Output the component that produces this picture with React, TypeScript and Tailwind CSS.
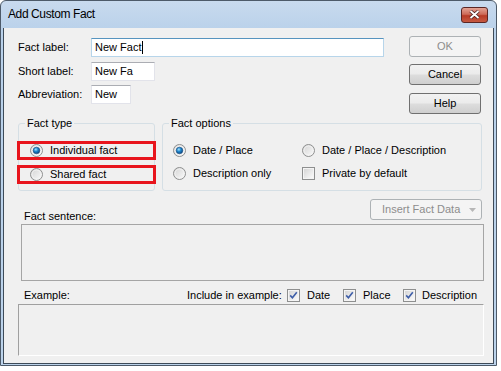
import React from "react";

function Radio({ checked }: { checked?: boolean }) {
  return (
    <svg width="13" height="13" viewBox="0 0 13 13" className="shrink-0">
      <defs>
        <linearGradient id="rf" x1="0" y1="0" x2="1" y2="1">
          <stop offset="0" stopColor="#d2d2d2" />
          <stop offset="1" stopColor="#fcfcfc" />
        </linearGradient>
        <radialGradient id="rd" cx="0.4" cy="0.35" r="0.7">
          <stop offset="0" stopColor="#a6e1fb" />
          <stop offset="0.45" stopColor="#1d86cc" />
          <stop offset="1" stopColor="#0c3e77" />
        </radialGradient>
      </defs>
      <circle cx="6.5" cy="6.5" r="6" fill="url(#rf)" stroke="#8e8f8f" strokeWidth="1" />
      <circle cx="6.5" cy="6.5" r="4.5" fill="none" stroke="#f4f4f4" strokeWidth="0.8" />
      {checked && <circle cx="6.5" cy="6.5" r="3.3" fill="url(#rd)" stroke="#174f85" strokeWidth="0.6" />}
    </svg>
  );
}

function Check({ checked }: { checked?: boolean }) {
  return (
    <svg width="13" height="13" viewBox="0 0 13 13" className="shrink-0">
      <defs>
        <linearGradient id="cf" x1="0" y1="0" x2="1" y2="1">
          <stop offset="0" stopColor={checked ? "#c3cde0" : "#d6d6d6"} />
          <stop offset="1" stopColor={checked ? "#eef2f8" : "#fafafa"} />
        </linearGradient>
      </defs>
      <rect x="0.5" y="0.5" width="12" height="12" fill="#f4f4f4" stroke="#8e8f8f" />
      <rect x="2" y="2" width="9" height="9" fill="url(#cf)" />
      {checked && (
        <path d="M3.2 6.4 L5.4 8.8 L9.8 3.2" fill="none" stroke="#3e5ea8" strokeWidth="1.6" />
      )}
    </svg>
  );
}

function Button({ label, disabled }: { label: string; disabled?: boolean }) {
  return (
    <div
      className={
        disabled
          ? "flex h-[21px] w-[72px] items-center justify-center rounded-[3px] border border-[#adb2b5] bg-[#f4f4f4] text-[#8d8d8d]"
          : "flex h-[21px] w-[72px] items-center justify-center rounded-[3px] border border-[#707070] bg-[linear-gradient(#f2f2f2_0%,#ebebeb_48%,#dddddd_52%,#cfcfcf_100%)] text-black"
      }
    >
      {label}
    </div>
  );
}

export default function App() {
  return (
    <div className="h-[371px] w-[501px] bg-white font-['Liberation_Sans',Arial,sans-serif] text-[11px] leading-[13px] text-black">
      <div className="flex h-[366px] w-[497px] flex-col rounded-t-[6px] border border-[#4d5a69] bg-[linear-gradient(#c8daee,#b9d1ea_30px,#bcd3eb)]">
        {/* title bar */}
        <div className="flex h-[27px] shrink-0 items-center pl-[7px] pr-[8px]">
          <span className="text-[12px] tracking-[-0.4px] text-black">Add Custom Fact</span>
          <div className="ml-auto flex h-[16px] w-[27px] items-center justify-center rounded-[3px] border border-[#5b2624] bg-[linear-gradient(#e3a394,#cd6a58_45%,#b83a26_55%,#c65a42)]">
            <svg width="11" height="9" viewBox="0 0 11 9">
              <path d="M1.5 1 L9.5 8 M9.5 1 L1.5 8" stroke="#4a2020" strokeWidth="3.4" />
              <path d="M1.5 1 L9.5 8 M9.5 1 L1.5 8" stroke="#ffffff" strokeWidth="1.8" />
            </svg>
          </div>
        </div>

        {/* client area */}
        <div className="ml-[2px] flex h-[336px] w-[491px] flex-col border-x border-b border-[#3e4b59] bg-[#f0f0f0]">
          {/* top section */}
          <div className="flex">
            <div className="flex flex-col pl-[14px]">
              <div className="mt-[10px] flex h-[19px] items-center">
                <span className="w-[73px]">Fact label:</span>
                <div className="flex h-[19px] w-[293px] items-center border border-[#b7d5ea] border-t-[#5794bf] bg-white pl-[3px]">
                  New Fact<span className="ml-[1px] h-[13px] w-[1px] bg-black" />
                </div>
              </div>
              <div className="mt-[5px] flex h-[19px] items-center">
                <span className="w-[73px]">Short label:</span>
                <div className="flex h-[19px] w-[64px] items-center border border-[#e2e3ea] border-t-[#abadb3] bg-white pl-[3px]">
                  New Fa
                </div>
              </div>
              <div className="mt-[4px] flex h-[19px] items-center">
                <span className="w-[73px]">Abbreviation:</span>
                <div className="flex h-[19px] w-[40px] items-center border border-[#e2e3ea] border-t-[#abadb3] bg-white pl-[3px]">
                  New
                </div>
              </div>
            </div>
            <div className="ml-auto mr-[12px] flex flex-col">
              <div className="mt-[8px]">
                <Button label="OK" disabled />
              </div>
              <div className="mt-[7px]">
                <Button label="Cancel" />
              </div>
              <div className="mt-[8px]">
                <Button label="Help" />
              </div>
            </div>
          </div>

          {/* group boxes */}
          <div className="mt-[3px] flex gap-[7px] pl-[14px]">
            <fieldset className="w-[137px] rounded-[3px] border border-[#d5dfe5]">
              <legend className="ml-[6px] px-[2px] leading-[13px]">Fact type</legend>
              <div className="flex flex-col pt-[11px] pb-[6px]">
                <div className="relative flex h-[19px] items-center gap-[7px] pl-[11px]">
                  <Radio checked />
                  <span>Individual fact</span>
                  <div className="absolute -left-[2px] -right-[2px] top-0 bottom-0 border-[3px] border-[#e8151d]" />
                </div>
                <div className="relative mt-[5px] flex h-[19px] items-center gap-[7px] pl-[11px]">
                  <Radio />
                  <span>Shared fact</span>
                  <div className="absolute -left-[2px] -right-[2px] top-0 bottom-0 border-[3px] border-[#e8151d]" />
                </div>
              </div>
            </fieldset>
            <fieldset className="w-[320px] rounded-[3px] border border-[#d5dfe5]">
              <legend className="ml-[6px] px-[2px] leading-[13px]">Fact options</legend>
              <div className="grid grid-cols-[129px_1fr] gap-y-[4px] pt-[11px] pb-[7px] pl-[10px]">
                <div className="flex h-[19px] items-center gap-[7px]">
                  <Radio checked />
                  <span>Date / Place</span>
                </div>
                <div className="flex h-[19px] items-center gap-[7px]">
                  <Radio />
                  <span>Date / Place / Description</span>
                </div>
                <div className="flex h-[19px] items-center gap-[7px]">
                  <Radio />
                  <span>Description only</span>
                </div>
                <div className="flex h-[19px] items-center gap-[7px]">
                  <Check />
                  <span>Private by default</span>
                </div>
              </div>
            </fieldset>
          </div>

          {/* fact sentence */}
          <div className="mt-[8px] flex items-end pl-[20px] pr-[11px]">
            <span className="mb-[-3px]">Fact sentence:</span>
            <div className="ml-auto flex h-[21px] w-[112px] items-center rounded-[3px] border border-[#adb2b5] bg-[#f4f4f4] pl-[11px] text-[#8d8d8d]">
              <span>Insert Fact Data</span>
              <svg width="7" height="4" viewBox="0 0 7 4" className="ml-auto mr-[5px]">
                <path d="M0 0 H7 L3.5 4 Z" fill="#b7b7b7" />
              </svg>
            </div>
          </div>
          <div className="ml-[17px] mt-[4px] h-[57px] w-[463px] border border-[#a5a5a5] bg-[#f0f0f0]" />

          {/* example */}
          <div className="mt-[8px] flex h-[13px] items-center pl-[20px]">
            <span className="w-[163px]">Example:</span>
            <span className="w-[100px]">Include in example:</span>
            <div className="flex w-[56px] items-center gap-[7px]">
              <Check checked />
              <span>Date</span>
            </div>
            <div className="flex w-[60px] items-center gap-[7px]">
              <Check checked />
              <span>Place</span>
            </div>
            <div className="flex items-center gap-[6px]">
              <Check checked />
              <span>Description</span>
            </div>
          </div>
          <div className="ml-[14px] mt-[2px] h-[52px] w-[466px] border border-[#a0a0a0] border-b-white border-r-white bg-[#f0f0f0]" />
        </div>
      </div>
    </div>
  );
}
